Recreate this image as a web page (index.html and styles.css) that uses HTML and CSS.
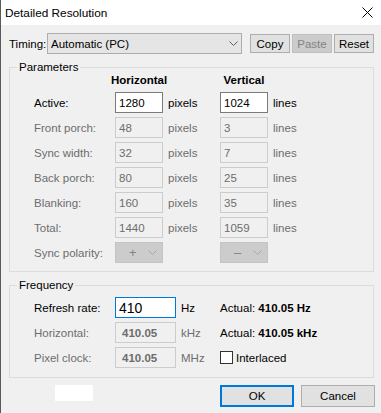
FILE: index.html
```html
<!DOCTYPE html>
<html>
<head>
    <link rel="stylesheet" href="styles.css">
</head>
<body>

<div class="window">
    <div class="titlebar">
        <span class="title">Detailed Resolution</span>
        <svg class="close" width="11" height="11" viewBox="0 0 11 11">
            <path d="M0.5 0.5 L10.5 10.5 M10.5 0.5 L0.5 10.5" stroke="#000" stroke-width="1"/>
        </svg>
    </div>

    <div class="timing-row">
        <span class="timing-label">Timing:</span>
        <div class="combo timing-combo">
            <span>Automatic (PC)</span>
            <svg width="9" height="5" viewBox="0 0 9 5"><path d="M0.5 0.5 L4.5 4.5 L8.5 0.5" fill="none" stroke="#606060"/></svg>
        </div>
        <button class="btn">Copy</button>
        <button class="btn" disabled>Paste</button>
        <button class="btn">Reset</button>
    </div>

    <div class="group params">
        <span class="group-title">Parameters</span>
        <div class="param-grid">
            <span></span>
            <span class="col-head">Horizontal</span>
            <span></span>
            <span class="col-head">Vertical</span>
            <span></span>

            <span class="label">Active:</span>
            <input class="field on" value="1280">
            <span class="unit">pixels</span>
            <input class="field on" value="1024">
            <span class="unit">lines</span>

            <span class="label dim">Front porch:</span>
            <input class="field" value="48" disabled>
            <span class="unit dim">pixels</span>
            <input class="field" value="3" disabled>
            <span class="unit dim">lines</span>

            <span class="label dim">Sync width:</span>
            <input class="field" value="32" disabled>
            <span class="unit dim">pixels</span>
            <input class="field" value="7" disabled>
            <span class="unit dim">lines</span>

            <span class="label dim">Back porch:</span>
            <input class="field" value="80" disabled>
            <span class="unit dim">pixels</span>
            <input class="field" value="25" disabled>
            <span class="unit dim">lines</span>

            <span class="label dim">Blanking:</span>
            <input class="field" value="160" disabled>
            <span class="unit dim">pixels</span>
            <input class="field" value="35" disabled>
            <span class="unit dim">lines</span>

            <span class="label dim">Total:</span>
            <input class="field" value="1440" disabled>
            <span class="unit dim">pixels</span>
            <input class="field" value="1059" disabled>
            <span class="unit dim">lines</span>

            <span class="label dim">Sync polarity:</span>
            <div class="combo polarity">
                <span>+</span>
                <svg width="9" height="5" viewBox="0 0 9 5"><path d="M0.5 0.5 L4.5 4.5 L8.5 0.5" fill="none" stroke="#a8a8a8"/></svg>
            </div>
            <span></span>
            <div class="combo polarity">
                <span>&ndash;</span>
                <svg width="9" height="5" viewBox="0 0 9 5"><path d="M0.5 0.5 L4.5 4.5 L8.5 0.5" fill="none" stroke="#a8a8a8"/></svg>
            </div>
            <span></span>
        </div>
    </div>

    <div class="group freq">
        <span class="group-title">Frequency</span>
        <div class="freq-grid">
            <span class="label">Refresh rate:</span>
            <input class="field on rate" value="410">
            <span class="unit">Hz</span>
            <span>Actual: <b>410.05 Hz</b></span>

            <span class="label dim">Horizontal:</span>
            <input class="field strong" value="410.05" disabled>
            <span class="unit dim">kHz</span>
            <span>Actual: <b>410.05 kHz</b></span>

            <span class="label dim">Pixel clock:</span>
            <input class="field strong" value="410.05" disabled>
            <span class="unit dim">MHz</span>
            <label class="check"><span class="box"></span>Interlaced</label>
        </div>
    </div>

    <div class="footer">
        <div class="blank"></div>
        <button class="btn dlg-btn ok">OK</button>
        <button class="btn dlg-btn">Cancel</button>
    </div>
</div>

</body>
</html>
```

FILE: styles.css
```css
body {
    margin: 0;
    font-family: "Liberation Sans", Arial, sans-serif;
    font-size: 11.5px;
    color: #000;
}

.window {
    width: 381px;
    height: 413px;
    box-sizing: border-box;
    border-left: 1px solid #5a5a5a;
    background-color: #f0f0f0;
}

.titlebar {
    height: 25px;
    background-color: #fff;
    display: flex;
    align-items: center;
    justify-content: space-between;
    padding: 0 8px 0 4px;
}

.title {
    font-size: 11.8px;
}

.timing-row {
    display: flex;
    align-items: center;
    height: 21px;
    margin-top: 8px;
    padding-left: 8px;
}

.timing-label {
    width: 38px;
}

.combo {
    display: flex;
    align-items: center;
    justify-content: space-between;
    box-sizing: border-box;
    height: 21px;
    border: 1px solid #adadad;
    background-color: #e5e5e5;
    padding: 0 3px 0 3px;
}

.timing-combo {
    width: 195px;
    margin-right: 8px;
}

.btn {
    font: inherit;
    color: #000;
    width: 40px;
    height: 19px;
    box-sizing: border-box;
    border: 1px solid #adadad;
    background-color: #e1e1e1;
    padding: 0;
    margin-right: 2px;
}

.btn:disabled {
    background-color: #cccccc;
    border-color: #bfbfbf;
    color: #838383;
}

.group {
    position: relative;
    border: 1px solid #dcdcdc;
    margin: 13px 7px 0 8px;
}

.group-title {
    position: absolute;
    top: -9px;
    left: 7px;
    padding: 0 2px;
    line-height: 16px;
    background-color: #f0f0f0;
}

.params {
    padding: 4px 0 8px 24px;
}

.freq {
    padding: 11px 0 9px 24px;
}

.param-grid {
    display: grid;
    grid-template-columns: 81px 48px 57px 48px auto;
    grid-template-rows: 16px;
    grid-auto-rows: 21px;
    row-gap: 4px;
    align-items: center;
}

.freq-grid {
    display: grid;
    grid-template-columns: 81px 61px 44px auto;
    grid-auto-rows: 21px;
    row-gap: 4px;
    align-items: center;
}

.col-head {
    font-weight: bold;
    text-align: center;
    margin: 0 -12px;
}

.dim {
    color: #6d6d6d;
}

.unit {
    padding-left: 5px;
}

.field {
    font: inherit;
    width: 100%;
    height: 21px;
    box-sizing: border-box;
    border: 1px solid #cccccc;
    background-color: #f0f0f0;
    color: #6d6d6d;
    padding: 0 3px;
    margin: 0;
    outline: none;
}

.field.on {
    border-color: #7a7a7a;
    background-color: #fff;
    color: #000;
}

.field.rate {
    font-size: 14px;
    border-color: #0078d7;
}

.field.strong {
    font-weight: bold;
    padding-left: 6px;
}

.polarity {
    background-color: #cccccc;
    border-color: #c4c4c4;
    color: #838383;
    padding: 0 5px 0 13px;
    font-size: 13px;
}

.check {
    display: flex;
    align-items: center;
    gap: 3px;
}

.box {
    width: 13px;
    height: 13px;
    box-sizing: border-box;
    border: 1px solid #333;
    background-color: #fff;
}

.footer {
    display: flex;
    align-items: flex-start;
    margin: 7px 6px 0 0;
}

.blank {
    width: 38px;
    height: 16px;
    background-color: #fff;
    margin-left: 54px;
    margin-right: auto;
}

.dlg-btn {
    width: 74px;
    height: 22px;
    margin-right: 0;
}

.ok {
    border: 2px solid #0078d7;
    margin-right: 7px;
}
```
